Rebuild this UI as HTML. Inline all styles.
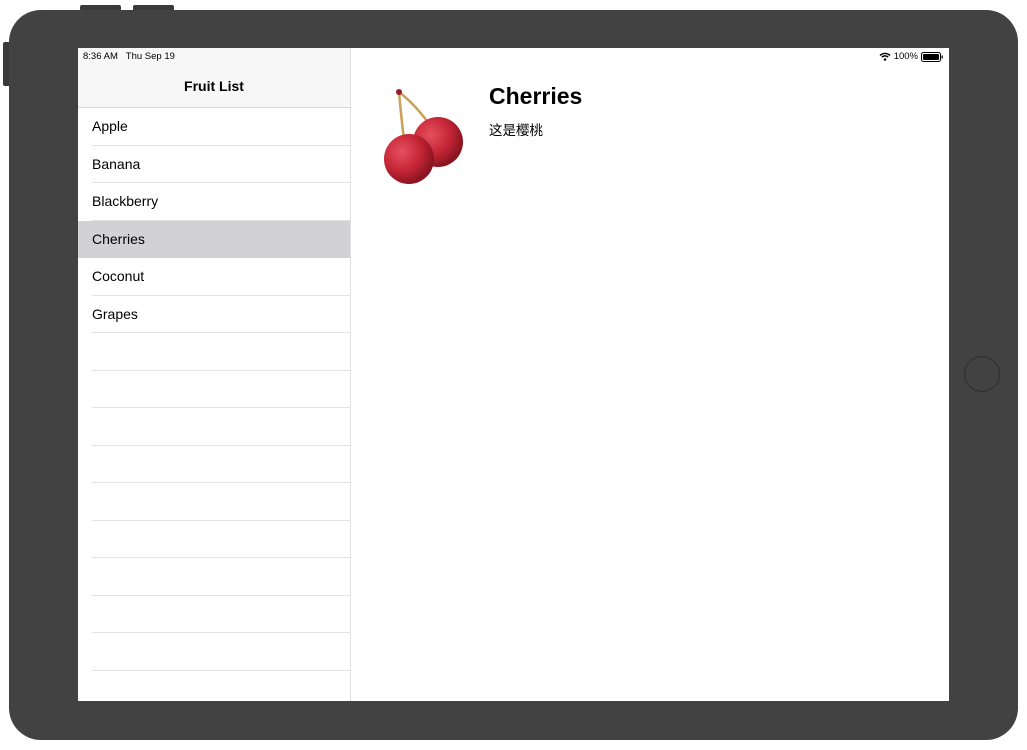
<!DOCTYPE html>
<html><head><meta charset="utf-8"><style>
*{margin:0;padding:0;box-sizing:border-box}
body{width:1027px;height:750px;background:#fff;position:relative;overflow:hidden;font-family:"Liberation Sans","Noto Sans CJK SC",sans-serif}
.dev{position:absolute;left:9px;top:10px;width:1009px;height:730px;background:#424242;border-radius:32px}
.btn{position:absolute;background:#3a3a3a;border-radius:2px}
.screen{position:absolute;left:78px;top:48px;width:871px;height:653px;background:#fff;overflow:hidden}
.side{position:absolute;left:0;top:0;width:273px;height:653px;border-right:1px solid #e0e0e0;background:#fff}
.nav{height:60px;background:#f7f7f7;border-bottom:1px solid #d8d8d8;position:relative}
.sb{position:absolute;top:3px;left:5px;font-size:9.5px;color:#000}
.title{position:absolute;top:30px;width:100%;text-align:center;font-size:14px;font-weight:bold;color:#000}
.row{height:37.5px;position:relative;font-size:14px;color:#000;padding-left:14px;line-height:37px}
.row:after{content:"";position:absolute;left:14px;right:0;bottom:0;height:1px;background:#e2e2e2}
.sel{background:#d1d1d6}
.sel:after{display:none}
</style></head><body>
<div class="btn" style="left:80px;top:5px;width:41px;height:6px"></div>
<div class="btn" style="left:133px;top:5px;width:41px;height:6px"></div>
<div class="btn" style="left:3px;top:42px;width:7px;height:44px"></div>
<div class="dev"></div>
<div style="position:absolute;left:964px;top:356px;width:36px;height:36px;border-radius:50%;border:1.5px solid #2e2e2e"></div>
<div class="screen">
 <div class="side">
  <div class="nav"><div class="sb">8:36 AM&nbsp;&nbsp;&nbsp;Thu Sep 19</div><div class="title">Fruit List</div></div>
  <div class="row">Apple</div><div class="row">Banana</div><div class="row">Blackberry</div>
  <div class="row sel">Cherries</div><div class="row">Coconut</div><div class="row">Grapes</div>
  <div class="row"></div><div class="row"></div><div class="row"></div><div class="row"></div><div class="row"></div><div class="row"></div><div class="row"></div><div class="row"></div><div class="row"></div><div class="row"></div>
 </div>
 <div style="position:absolute;right:6px;top:3px;font-size:9.5px;display:flex;align-items:center;gap:3px">
  <svg width="12" height="9" viewBox="0 0 12 9"><path d="M1 3.5a7 7 0 0 1 10 0M2.8 5.2a4.5 4.5 0 0 1 6.4 0" stroke="#000" stroke-width="1.4" fill="none"/><circle cx="6" cy="7.5" r="1.3"/></svg>
  <span>100%</span>
  <svg width="22" height="10" viewBox="0 0 22 10"><rect x="0.5" y="0.5" width="19" height="9" rx="2" fill="none" stroke="#000"/><rect x="2" y="2" width="16" height="6" rx="1"/><rect x="20.5" y="3.5" width="1.3" height="3" fill="#000"/></svg>
 </div>
 <svg style="position:absolute;left:304px;top:38px" width="84" height="100" viewBox="0 0 84 100">
  <defs><radialGradient id="g" cx="35%" cy="35%" r="65%"><stop offset="0" stop-color="#e5505e"/><stop offset=".6" stop-color="#c52535"/><stop offset="1" stop-color="#8c1522"/></radialGradient></defs>
  <path d="M17 6 Q20 40 23 60" stroke="#c9a25a" stroke-width="2.5" fill="none"/>
  <path d="M17 6 Q35 20 50 42" stroke="#c9a25a" stroke-width="2.5" fill="none"/>
  <circle cx="17" cy="6" r="3" fill="#9a1a2a"/>
  <circle cx="56" cy="56" r="25" fill="url(#g)"/>
  <circle cx="27" cy="73" r="25" fill="url(#g)"/>
 </svg>
 <div style="position:absolute;left:411px;top:35px;font-size:23px;font-weight:bold;color:#000">Cherries</div>
 <div style="position:absolute;left:411px;top:71px;font-size:13.5px;color:#000">这是樱桃</div>
</div>
</body></html>
